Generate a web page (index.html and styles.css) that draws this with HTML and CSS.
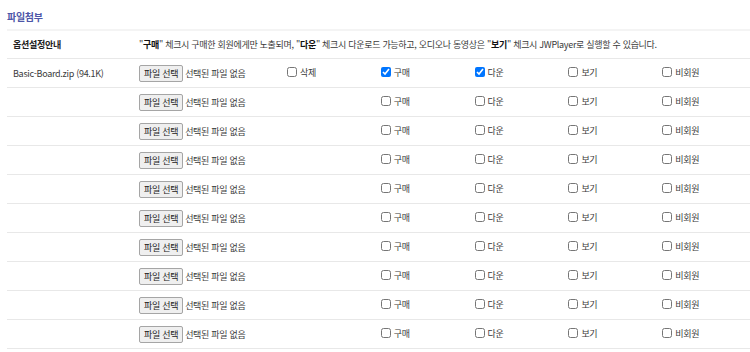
FILE: index.html
```html
<!DOCTYPE html>
<html lang="ko">
<head>
  <meta charset="UTF-8">
  <title>파일첨부</title>
  <link rel="stylesheet" href="styles.css">
</head>
<body>

  <div class="wrap">
    <h2 class="title">파일첨부</h2>

    <table class="files">
      <colgroup>
        <col class="c-name">
        <col class="c-file">
        <col><col><col><col><col>
      </colgroup>
      <tr class="guide">
        <th>옵션설정안내</th>
        <td colspan="6">"<b>구매</b>" 체크시 구매한 회원에게만 노출되며, "<b>다운</b>" 체크시 다운로드 가능하고, 오디오나 동영상은 "<b>보기</b>" 체크시 JWPlayer로 실행할 수 있습니다.</td>
      </tr>
      <tbody id="rows"></tbody>
    </table>
  </div>

  <script>
    const rows = document.getElementById("rows");

    function box(label, checked) {
      return '<label class="opt"><input type="checkbox"' + (checked ? ' checked' : '') + '>' + label + '</label>';
    }

    for (let i = 0; i < 10; i++) {
      const tr = document.createElement("tr");
      const first = i === 0;
      tr.innerHTML =
        '<td class="name">' + (first ? 'Basic-Board.zip (94.1K)' : '') + '</td>' +
        '<td><span class="file-btn">파일 선택</span><span class="file-none">선택된 파일 없음</span></td>' +
        '<td>' + (first ? box('삭제', false) : '') + '</td>' +
        '<td>' + box('구매', first) + '</td>' +
        '<td>' + box('다운', first) + '</td>' +
        '<td>' + box('보기', false) + '</td>' +
        '<td>' + box('비회원', false) + '</td>';
      rows.appendChild(tr);
    }
  </script>

</body>
</html>
```

FILE: styles.css
```css
body {
  margin: 0;
  background: #fff;
  color: #3a3a3a;
  font-family: "Noto Sans CJK KR", "Liberation Sans", sans-serif;
  font-size: 9px;
  letter-spacing: -0.3px;
}

.wrap {
  padding: 0 0 0 7px;
}

.title {
  margin: 0 0 5px;
  padding-top: 10px;
  font-size: 10px;
  line-height: 14px;
  font-weight: bold;
  color: #4d56a8;
}

.files {
  width: 743px;
  border-collapse: collapse;
  table-layout: fixed;
  border-top: 2px solid #f4f4f4;
}

.c-name {
  width: 126px;
}

.c-file {
  width: 148px;
}

.files th,
.files td {
  height: 28px;
  padding: 0 0 0 6px;
  border-bottom: 1px solid #e8e8e8;
  text-align: left;
  white-space: nowrap;
  vertical-align: middle;
}

.guide th,
.guide td {
  height: 27px;
}

.guide th {
  font-weight: bold;
  color: #222;
}

.guide b {
  color: #111;
}

.file-btn {
  display: inline-block;
  box-sizing: border-box;
  height: 17px;
  line-height: 15px;
  padding: 0 4px;
  margin-right: 2px;
  border: 1px solid #a5a5a5;
  border-radius: 2px;
  background: #efefef;
  color: #222;
  vertical-align: middle;
}

.file-none {
  vertical-align: middle;
}

.opt {
  display: inline-flex;
  align-items: center;
  gap: 3px;
}

.opt input {
  width: 10px;
  height: 10px;
  margin: 0;
}
```
